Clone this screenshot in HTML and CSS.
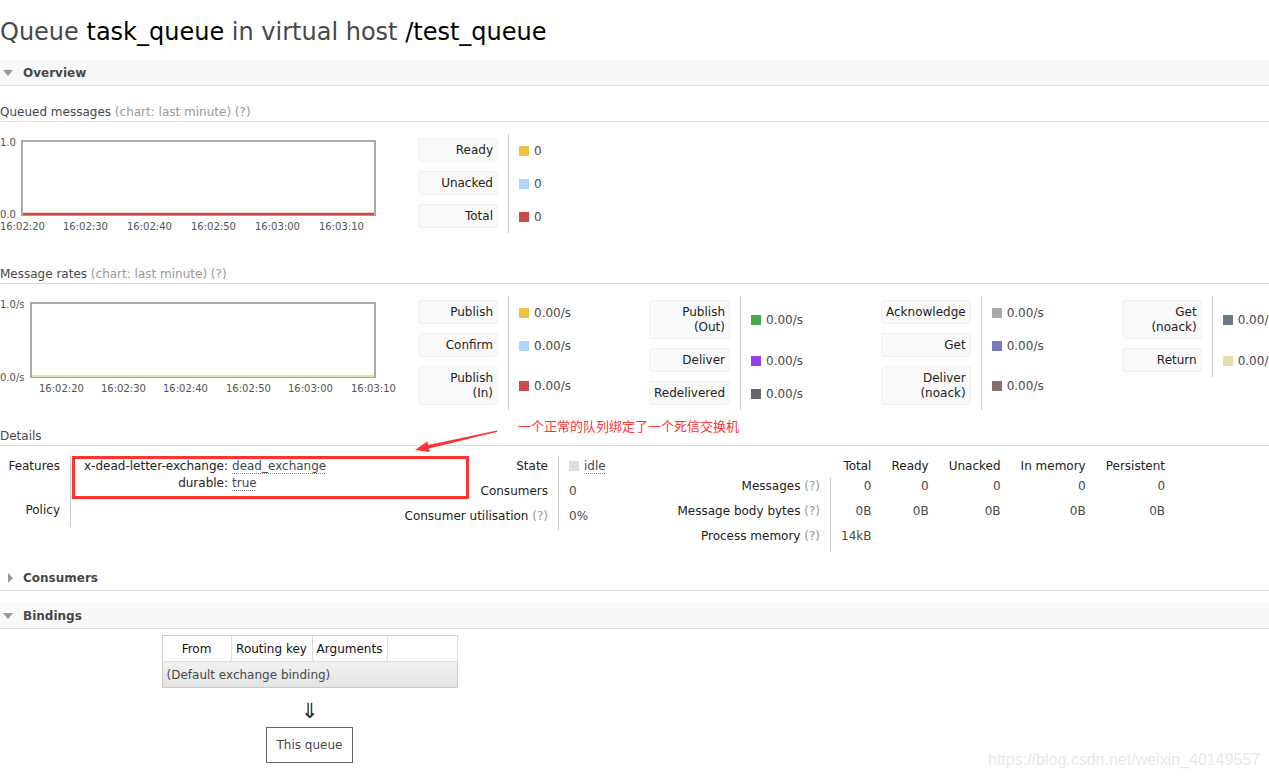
FILE: index.html
```html
<!DOCTYPE html>
<html lang="en">
<head>
<meta charset="utf-8">
<title>RabbitMQ: Queue task_queue</title>
<link rel="stylesheet" href="styles.css">
</head>
<body>
<h1>Queue <b>task_queue</b> in virtual host <b>/test_queue</b></h1>

<div class="section">
  <h2 class="sec-head shaded"><span class="tri tri-down"></span>Overview</h2>

  <h3 class="sub">Queued messages <span class="help">(chart: last minute) (?)</span></h3>
  <div class="chart-row">
    <svg class="chart" width="418" height="114" viewBox="0 0 418 114">
      <rect class="plot" x="22" y="7" width="353" height="74"></rect>
      <line class="ln-total" x1="23" y1="80" x2="374" y2="80"></line>
      <text x="0" y="11.6">1.0</text>
      <text x="0" y="83.6">0.0</text>
      <text x="0" y="95.6">16:02:20</text>
      <text x="63" y="95.6">16:02:30</text>
      <text x="127" y="95.6">16:02:40</text>
      <text x="191" y="95.6">16:02:50</text>
      <text x="255" y="95.6">16:03:00</text>
      <text x="319" y="95.6">16:03:10</text>
    </svg>
    <div class="legend">
      <div class="lg-col">
        <div class="lg-label"><span class="lg-box">Ready</span></div>
        <div class="lg-val"><span class="sw c-ready"></span>0</div>
        <div class="lg-label"><span class="lg-box">Unacked</span></div>
        <div class="lg-val"><span class="sw c-unacked"></span>0</div>
        <div class="lg-label"><span class="lg-box">Total</span></div>
        <div class="lg-val"><span class="sw c-total"></span>0</div>
      </div>
    </div>
  </div>

  <h3 class="sub">Message rates <span class="help">(chart: last minute) (?)</span></h3>
  <div class="chart-row">
    <svg class="chart" width="418" height="114" viewBox="0 0 418 114">
      <rect class="plot" x="31" y="7" width="344" height="74"></rect>
      <line class="ln-return" x1="32" y1="80" x2="374" y2="80"></line>
      <text x="0" y="11.6">1.0/s</text>
      <text x="0" y="84.6">0.0/s</text>
      <text x="39" y="95.6">16:02:20</text>
      <text x="101" y="95.6">16:02:30</text>
      <text x="163" y="95.6">16:02:40</text>
      <text x="226" y="95.6">16:02:50</text>
      <text x="288" y="95.6">16:03:00</text>
      <text x="351" y="95.6">16:03:10</text>
    </svg>
    <div class="legend">
      <div class="lg-col">
        <div class="lg-label"><span class="lg-box">Publish</span></div>
        <div class="lg-val"><span class="sw c-publish"></span>0.00/s</div>
        <div class="lg-label"><span class="lg-box">Confirm</span></div>
        <div class="lg-val"><span class="sw c-confirm"></span>0.00/s</div>
        <div class="lg-label"><span class="lg-box">Publish<br>(In)</span></div>
        <div class="lg-val"><span class="sw c-pubin"></span>0.00/s</div>
      </div>
      <div class="lg-col">
        <div class="lg-label"><span class="lg-box">Publish<br>(Out)</span></div>
        <div class="lg-val"><span class="sw c-pubout"></span>0.00/s</div>
        <div class="lg-label"><span class="lg-box">Deliver</span></div>
        <div class="lg-val"><span class="sw c-deliver"></span>0.00/s</div>
        <div class="lg-label"><span class="lg-box">Redelivered</span></div>
        <div class="lg-val"><span class="sw c-redeliver"></span>0.00/s</div>
      </div>
      <div class="lg-col">
        <div class="lg-label"><span class="lg-box">Acknowledge</span></div>
        <div class="lg-val"><span class="sw c-ack"></span>0.00/s</div>
        <div class="lg-label"><span class="lg-box">Get</span></div>
        <div class="lg-val"><span class="sw c-get"></span>0.00/s</div>
        <div class="lg-label"><span class="lg-box">Deliver<br>(noack)</span></div>
        <div class="lg-val"><span class="sw c-delnoack"></span>0.00/s</div>
      </div>
      <div class="lg-col">
        <div class="lg-label"><span class="lg-box">Get<br>(noack)</span></div>
        <div class="lg-val"><span class="sw c-getnoack"></span>0.00/s</div>
        <div class="lg-label"><span class="lg-box">Return</span></div>
        <div class="lg-val"><span class="sw c-return"></span>0.00/s</div>
      </div>
    </div>
  </div>

  <h3 class="sub">Details</h3>
  <div class="details">
    <table class="facts facts-a">
      <tr>
        <th>Features</th>
        <td>
          <table class="kv">
            <tr><th>x-dead-letter-exchange:</th><td><span class="abbr">dead_exchange</span></td></tr>
            <tr><th>durable:</th><td><span class="abbr">true</span></td></tr>
          </table>
        </td>
      </tr>
      <tr><th>Policy</th><td></td></tr>
    </table>

    <table class="facts facts-b">
      <tr><th>State</th><td><span class="sw c-idle"></span><span class="abbr">idle</span></td></tr>
      <tr><th>Consumers</th><td>0</td></tr>
      <tr><th>Consumer utilisation <span class="help">(?)</span></th><td>0%</td></tr>
    </table>

    <table class="facts facts-c">
      <tr class="hdr"><th class="blank"></th><th>Total</th><th>Ready</th><th>Unacked</th><th>In memory</th><th>Persistent</th></tr>
      <tr><th class="lbl">Messages <span class="help">(?)</span></th><td>0</td><td>0</td><td>0</td><td>0</td><td>0</td></tr>
      <tr><th class="lbl">Message body bytes <span class="help">(?)</span></th><td>0B</td><td>0B</td><td>0B</td><td>0B</td><td>0B</td></tr>
      <tr><th class="lbl">Process memory <span class="help">(?)</span></th><td>14kB</td><td></td><td></td><td></td><td></td></tr>
    </table>

    <div class="mark-box"></div>
    <div class="mark-text">一个正常的队列绑定了一个死信交换机</div>
    <svg class="mark-arrow" width="110" height="45" viewBox="400 415 110 45">
      <polygon points="497,430.4 428.2,445.1 427.3,441.6 415,450 430,452 429,448.6 497.3,431.8"></polygon>
    </svg>
  </div>
</div>

<div class="section">
  <h2 class="sec-head"><span class="tri tri-right"></span>Consumers</h2>
</div>

<div class="section">
  <h2 class="sec-head shaded"><span class="tri tri-down"></span>Bindings</h2>
  <div class="bind-wrap">
    <table class="bind">
      <colgroup><col class="bc1"><col class="bc2"><col class="bc3"><col class="bc4"></colgroup>
      <thead>
        <tr><th>From</th><th>Routing key</th><th>Arguments</th><th></th></tr>
      </thead>
      <tbody>
        <tr><td colspan="4">(Default exchange binding)</td></tr>
      </tbody>
    </table>
    <div class="down-arrow">&#8659;</div>
    <div class="this-queue">This queue</div>
  </div>
</div>

<div class="watermark">https://blog.csdn.net/weixin_40149557</div>
</body>
</html>
```

FILE: styles.css
```css
html, body {
  margin: 0;
  padding: 0;
  overflow: hidden;
}

body {
  position: relative;
  width: 1269px;
  height: 779px;
  background: #fff;
  color: #484848;
  font-family: "DejaVu Sans", Verdana, sans-serif;
  font-size: 12px;
}

h1 {
  margin: 18px 0 14px;
  font-size: 24px;
  line-height: 28px;
  font-weight: normal;
  color: #484848;
  white-space: nowrap;
}

h1 b {
  font-weight: normal;
  color: #000;
}

/* section headers */
.sec-head {
  display: flex;
  align-items: center;
  height: 25px;
  margin: 0;
  font-size: 12px;
  font-weight: bold;
  color: #484848;
  border-bottom: 1px solid #ddd;
}

.sec-head.shaded {
  background: #f8f8f8;
}

.section {
  margin-bottom: 12px;
}

.tri {
  display: block;
  width: 0;
  height: 0;
  flex: none;
}

.tri-down {
  margin: 1px 10px 0 3px;
  border-left: 5px solid transparent;
  border-right: 5px solid transparent;
  border-top: 6px solid #999;
}

.tri-right {
  margin: 0 10px 0 8px;
  border-top: 5px solid transparent;
  border-bottom: 5px solid transparent;
  border-left: 5px solid #999;
}

/* sub headings */
.sub {
  margin: 17px 0 0;
  padding: 2px 0 1px;
  font-size: 12px;
  line-height: 15px;
  font-weight: normal;
  color: #484848;
  border-bottom: 1px solid #ddd;
}

.help {
  color: #999;
}

/* charts */
.chart-row {
  display: flex;
  align-items: flex-start;
  margin-top: 12px;
}

.chart {
  flex: none;
  display: block;
}

.chart .plot {
  fill: none;
  stroke: #aaa;
  stroke-width: 2;
}

.chart text {
  font-family: "DejaVu Sans", Verdana, sans-serif;
  font-size: 10px;
  fill: #545454;
}

.ln-total {
  stroke: #cb4b4b;
  stroke-width: 2.5;
}

.ln-return {
  stroke: #e4dfa8;
  stroke-width: 2;
}

/* legends */
.legend {
  display: flex;
  flex: none;
  align-items: flex-start;
}

.lg-col {
  flex: none;
  display: grid;
  grid-template-columns: auto 141px;
}

.lg-label {
  padding: 4px 10px 5px 0;
}

.lg-box {
  display: block;
  min-width: 80px;
  box-sizing: border-box;
  padding: 4px 4px 3px;
  line-height: 15px;
  text-align: right;
  color: #222;
  background: #f9f9f9;
  border: 1px solid #f0f0f0;
  border-radius: 3px;
}

.lg-val {
  display: flex;
  align-items: center;
  box-sizing: border-box;
  padding-left: 10px;
  border-left: 1px solid #ccc;
  color: #484848;
  white-space: nowrap;
}

.sw {
  display: inline-block;
  flex: none;
  width: 10px;
  height: 10px;
  margin-right: 5px;
}

.c-ready, .c-publish { background: #edc240; }
.c-unacked, .c-confirm { background: #afd8f8; }
.c-total, .c-pubin { background: #cb4b4b; }
.c-pubout { background: #4da74d; }
.c-deliver { background: #9440ed; }
.c-redeliver { background: #666; }
.c-ack { background: #aaa; }
.c-get { background: #7c79c3; }
.c-delnoack { background: #8d6c6c; }
.c-getnoack { background: #697c88; }
.c-return { background: #e4e0a9; }
.c-idle { background: #ddd; vertical-align: -1px; }

/* details */
.details {
  position: relative;
  display: flex;
  align-items: flex-start;
  margin-top: 10px;
  padding-bottom: 1px;
}

.facts {
  flex: none;
  border-collapse: separate;
  border-spacing: 0;
  line-height: 17px;
}

.facts th,
.facts td {
  vertical-align: top;
  white-space: nowrap;
}

.facts th {
  font-weight: normal;
  text-align: right;
  color: #222;
}

.facts td {
  color: #484848;
  text-align: left;
}

.facts-a {
  width: 400px;
}

.facts-a > tbody > tr > th {
  width: 60px;
  padding: 2px 10px 8px 0;
  border-right: 1px solid #ccc;
}

.facts-a > tbody > tr > td {
  padding: 2px 0 8px 13px;
}

.kv {
  border-collapse: collapse;
}

.kv th,
.kv td {
  padding: 0;
}

.kv td {
  padding-left: 4px;
}

.abbr {
  text-decoration: underline dotted #888;
  text-underline-offset: 3px;
}

.facts-b th {
  width: 148px;
  padding: 2px 10px 6px 0;
  border-right: 1px solid #ccc;
}

.facts-b td {
  width: 90px;
  padding: 2px 0 6px 10px;
}

.facts-c th,
.facts-c td {
  padding: 1px 10px 7px;
  text-align: right;
}

.facts-c .hdr th {
  padding-top: 2px;
  padding-bottom: 2px;
}

.facts-c th.blank,
.facts-c th.lbl {
  width: 161px;
  padding-left: 0;
  padding-right: 10px;
}

.facts-c th.lbl {
  border-right: 1px solid #ccc;
}

/* annotation overlay */
.mark-box {
  position: absolute;
  left: 72px;
  top: 0;
  width: 397px;
  height: 43px;
  box-sizing: border-box;
  border: 3px solid #f33;
}

.mark-text {
  position: absolute;
  left: 518px;
  top: -39px;
  font-family: "Noto Sans CJK SC", "DejaVu Sans", sans-serif;
  font-size: 13px;
  line-height: 17px;
  color: #f33;
  white-space: nowrap;
}

.mark-arrow {
  position: absolute;
  left: 400px;
  top: -41px;
}

.mark-arrow polygon {
  fill: #f33;
}

/* bindings */
.bind-wrap {
  display: flex;
  flex-direction: column;
  align-items: center;
  width: 295px;
  margin: 6px 0 0 162px;
}

.bind {
  width: 295px;
  table-layout: fixed;
  border-collapse: collapse;
  border: 1px solid #ccc;
}

.bc1 { width: 69px; }
.bc2 { width: 81px; }
.bc3 { width: 75px; }
.bc4 { width: 70px; }

.bind th {
  height: 25px;
  padding: 0;
  font-weight: normal;
  text-align: center;
  color: #111;
  background: #fff;
  border-right: 1px solid #ddd;
  white-space: nowrap;
}

.bind td {
  height: 25px;
  padding: 0 4px;
  text-align: left;
  color: #484848;
  background: linear-gradient(#f2f2f2, #e3e3e3);
  border-top: 1px solid #ddd;
  white-space: nowrap;
}

.down-arrow {
  margin-top: 13px;
  font-size: 21px;
  line-height: 21px;
  color: #222;
}

.this-queue {
  margin-top: 5px;
  padding: 8px 10px;
  line-height: 18px;
  color: #484848;
  border: 1px solid #666;
}

.watermark {
  position: absolute;
  left: 988px;
  top: 751px;
  font-family: "Liberation Sans", Arial, sans-serif;
  font-size: 16px;
  line-height: 18px;
  color: #e8e8e8;
  white-space: nowrap;
}
```
